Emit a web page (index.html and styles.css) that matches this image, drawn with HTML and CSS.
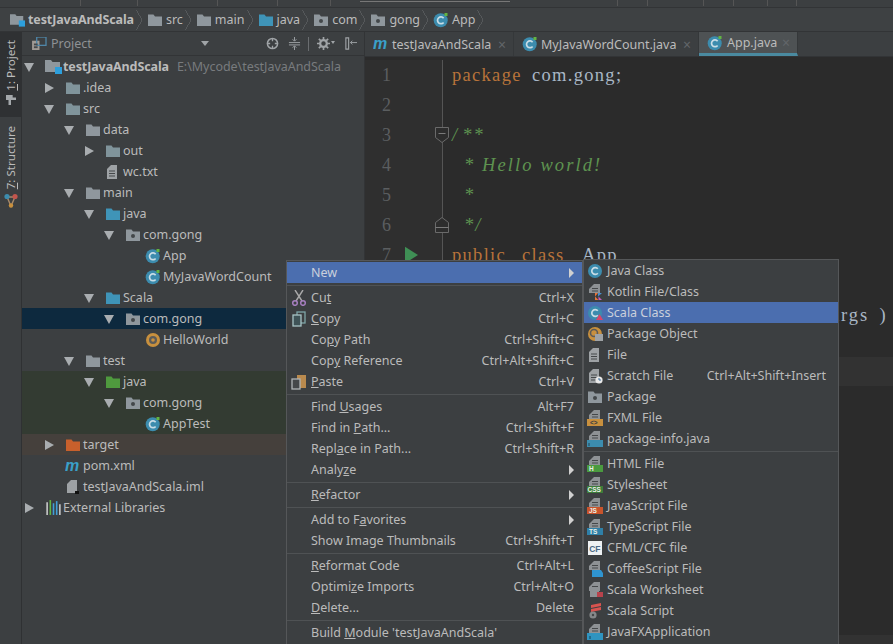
FILE: index.html
```html
<!DOCTYPE html>
<html lang="en">
<head>
<meta charset="utf-8">
<title>testJavaAndScala</title>
<link rel="stylesheet" href="styles.css">
</head>
<body>
<svg class="defs" width="0" height="0" aria-hidden="true">
  <symbol id="folder" viewBox="0 0 16 16"><path fill="currentColor" d="M1 2.5h5.5l1.5 2h7v9.5H1z"/></symbol>
  <symbol id="pkg" viewBox="0 0 16 16"><path fill="currentColor" d="M1 2.5h5.5l1.5 2h7v9.5H1z"/><circle cx="8" cy="9" r="2" fill="#43474a"/></symbol>
  <symbol id="root" viewBox="0 0 17 17"><path fill="#8f979d" d="M0 2h6l1.5 2H15v10H0z"/><rect x="10" y="9" width="7" height="7" fill="#2d9fdc"/></symbol>
  <symbol id="cls" viewBox="0 0 16 16"><circle cx="7.7" cy="8.3" r="7" fill="#3c8cae"/><path d="M10.6 6.2a3.4 3.4 0 1 0 0 4.2" fill="none" stroke="#c9dde6" stroke-width="1.7"/><path d="M11.5 1h3v3h-3z" fill="#62b543"/></symbol>
  <symbol id="obj" viewBox="0 0 16 16"><circle cx="8" cy="8" r="7" fill="#c8903e"/><circle cx="8" cy="8" r="4" fill="#5c5b58"/><circle cx="8" cy="8" r="1.8" fill="#c8903e"/></symbol>
  <symbol id="doc" viewBox="0 0 16 16"><path fill="#9ea2a5" d="M6 1h6v14H2V5z"/><path stroke="#45484a" stroke-width="1" d="M4 7h6M4 9.5h6M4 12h6"/></symbol>
  <symbol id="tpl" viewBox="0 0 16 16"><path fill="#8e9295" d="M7 0h6v9H2V5z"/><path stroke="#45484a" stroke-width="1" d="M5 4.5h6M5 7h6"/></symbol>
</svg>

<header class="topstrip"></header>

<nav class="crumbs">
  <span class="crumb c-first"><svg class="ic-root"><use href="#root"/></svg><b>testJavaAndScala</b></span><i class="chev"></i>
  <span class="crumb"><svg class="ic16 grey"><use href="#folder"/></svg>src</span><i class="chev"></i>
  <span class="crumb"><svg class="ic16 grey"><use href="#folder"/></svg>main</span><i class="chev"></i>
  <span class="crumb"><svg class="ic16 blue"><use href="#folder"/></svg>java</span><i class="chev"></i>
  <span class="crumb"><svg class="ic16 grey"><use href="#pkg"/></svg>com</span><i class="chev"></i>
  <span class="crumb"><svg class="ic16 grey"><use href="#pkg"/></svg>gong</span><i class="chev"></i>
  <span class="crumb"><svg class="ic16"><use href="#cls"/></svg>App</span><i class="chev"></i>
</nav>

<div class="workspace">
  <aside class="toolstrip">
    <div class="tool tool-on">
      <span class="tool-t"><u>1</u>: Project</span>
      <svg class="tool-ic" viewBox="0 0 12 12"><path fill="#a4a8ab" d="M0 0h8v3h4v3H6v6H3V6H0z"/></svg>
    </div>
    <div class="tool">
      <span class="tool-t"><u>7</u>: Structure</span>
      <svg class="tool-ic2" viewBox="0 0 14 15"><path d="M3 4l4 9 4-9z" fill="none" stroke="#a88a6a" stroke-width="1.4"/><circle cx="3" cy="3.5" r="2.6" fill="#3c8cae"/><circle cx="11" cy="3.5" r="2.6" fill="#c2554d"/><circle cx="7" cy="12.5" r="2.2" fill="#c8903e"/></svg>
    </div>
  </aside>

  <section class="project">
    <div class="ph">
      <svg class="ph-ic" viewBox="0 0 16 14"><rect x="0" y="4" width="8" height="10" fill="#a09a94"/><rect x="5" y="0" width="10" height="9" fill="none" stroke="#4f86a8" stroke-width="1.4"/><rect x="2" y="7" width="4" height="2" fill="#45484a"/><rect x="2" y="10" width="4" height="2" fill="#45484a"/></svg>
      <span class="ph-t">Project</span>
      <i class="ph-drop"></i>
      <svg class="ph-btn b1" viewBox="0 0 14 14"><circle cx="7" cy="7" r="5.5" fill="none" stroke="#a0a4a7" stroke-width="1.6"/><path d="M7 1v3.5M7 9.5V13M1 7h3.5M9.5 7H13" stroke="#a0a4a7" stroke-width="1.4"/></svg>
      <svg class="ph-btn b2" viewBox="0 0 14 14"><path d="M1 6h12M1 8.500h12" stroke="#a0a4a7"/><path d="M7 0v4M5 2.500l2 2 2-2M7 14v-4M5 11.500l2-2 2 2" fill="none" stroke="#a0a4a7"/></svg>
      <i class="ph-sep"></i>
      <svg class="ph-btn b3" viewBox="0 0 14 14"><circle cx="7" cy="7" r="3.600" fill="none" stroke="#a0a4a7" stroke-width="2.400"/><path d="M7 0v3M7 11v3M0 7h3M11 7h3M2 2l2 2M10 10l2 2M12 2l-2 2M4 10l-2 2" stroke="#a0a4a7" stroke-width="1.800"/></svg>
      <i class="ph-drop2"></i>
      <svg class="ph-btn b4" viewBox="0 0 14 14"><path d="M2 1h3v12H2z" fill="none" stroke="#a0a4a7" stroke-width="1.200"/><path d="M7 6h7M9 4L7 6l2 2" fill="none" stroke="#a0a4a7"/></svg>
    </div>
    <div class="tree">
      <div class="row l0"><i class="ar down"></i><svg class="ic17 mr1"><use href="#root"/></svg><b>testJavaAndScala</b><span class="path">E:\Mycode\testJavaAndScala</span></div>
      <div class="row l1"><i class="ar right"></i><svg class="ic16 excl"><use href="#folder"/></svg>.idea</div>
      <div class="row l1"><i class="ar down"></i><svg class="ic16 excl"><use href="#folder"/></svg>src</div>
      <div class="row l2"><i class="ar down"></i><svg class="ic16 grey"><use href="#folder"/></svg>data</div>
      <div class="row l3"><i class="ar right"></i><svg class="ic16 excl"><use href="#folder"/></svg>out</div>
      <div class="row l3"><i class="ar"></i><svg class="ic16"><use href="#doc"/></svg>wc.txt</div>
      <div class="row l2"><i class="ar down"></i><svg class="ic16 grey"><use href="#folder"/></svg>main</div>
      <div class="row l3"><i class="ar down"></i><svg class="ic16 blue"><use href="#folder"/></svg>java</div>
      <div class="row l4"><i class="ar down"></i><svg class="ic16 grey"><use href="#pkg"/></svg>com.gong</div>
      <div class="row l5"><i class="ar"></i><svg class="ic16"><use href="#cls"/></svg>App</div>
      <div class="row l5"><i class="ar"></i><svg class="ic16"><use href="#cls"/></svg>MyJavaWordCount</div>
      <div class="row l3"><i class="ar down"></i><svg class="ic16 blue"><use href="#folder"/></svg>Scala</div>
      <div class="row l4 sel"><i class="ar down"></i><svg class="ic16 grey"><use href="#pkg"/></svg>com.gong</div>
      <div class="row l5"><i class="ar"></i><svg class="ic16"><use href="#obj"/></svg>HelloWorld</div>
      <div class="row l2"><i class="ar down"></i><svg class="ic16 grey"><use href="#folder"/></svg>test</div>
      <div class="row l3 tst"><i class="ar down"></i><svg class="ic16 green"><use href="#folder"/></svg>java</div>
      <div class="row l4 tst"><i class="ar down"></i><svg class="ic16 grey"><use href="#pkg"/></svg>com.gong</div>
      <div class="row l5 tst"><i class="ar"></i><svg class="ic16"><use href="#cls"/></svg>AppTest</div>
      <div class="row l1 tgt"><i class="ar right"></i><svg class="ic16 orange"><use href="#folder"/></svg>target</div>
      <div class="row l1"><i class="ar"></i><svg class="ic16" viewBox="0 0 16 16"><text x="0" y="13" class="mvn">m</text></svg>pom.xml</div>
      <div class="row l1"><i class="ar"></i><svg class="ic16" viewBox="0 0 16 16"><path fill="#9ea2a5" d="M6 1h6v13H2V5z"/><rect x="10" y="12" width="4" height="3" fill="#111"/></svg>testJavaAndScala.iml</div>
      <div class="row l0"><i class="ar right"></i><svg class="ic17 mr1" viewBox="0 0 16 16"><path d="M2 3v12" stroke="#c9c9c9" stroke-width="1.500"/><path d="M5 1v14" stroke="#62b543" stroke-width="1.500"/><path d="M8 4v11" stroke="#40a0d8" stroke-width="1.500"/><path d="M11 2v13" stroke="#40a0d8" stroke-width="1.500"/><path d="M14 5v10" stroke="#c9c9c9" stroke-width="1.500"/></svg>External Libraries</div>
    </div>
  </section>

  <main class="editor">
    <div class="tabs">
      <div class="tab t1"><svg class="ic16" viewBox="0 0 16 16"><text x="0" y="13" class="mvn">m</text></svg>testJavaAndScala<i class="x">×</i></div>
      <div class="tab t2"><svg class="ic16"><use href="#cls"/></svg>MyJavaWordCount.java<i class="x">×</i></div>
      <div class="tab t3"><svg class="ic16"><use href="#cls"/></svg>App.java<i class="x">×</i></div>
    </div>
    <div class="code">
      <div class="line"><div class="gut"><span class="ln">1</span></div><pre><span class="kw w8">package</span><span class="pk">com.gong;</span></pre></div>
      <div class="line"><div class="gut"><span class="ln">2</span></div><pre></pre></div>
      <div class="line"><div class="gut"><span class="ln">3</span><svg class="fold" viewBox="0 0 16 18"><path d="M1.500 1.500h13v10L8 16.500 1.500 11.500z" fill="#2d2d2d" stroke="#6a6a6a"/><path d="M4.500 7.500h7" stroke="#7a7a7a"/></svg></div><pre class="cm"><span class="sl">/</span>**</pre></div>
      <div class="line"><div class="gut"><span class="ln">4</span></div><pre class="cm cmi">* Hello world!</pre></div>
      <div class="line"><div class="gut"><span class="ln">5</span></div><pre class="cm cmi">*</pre></div>
      <div class="line"><div class="gut"><span class="ln">6</span><svg class="fold" viewBox="0 0 16 18"><path d="M1.500 16.500h13v-10L8 1.500 1.500 6.500z" fill="#2d2d2d" stroke="#6a6a6a"/><path d="M1.500 11.500h13" stroke="#7a7a7a"/></svg></div><pre class="cm cmi">*/</pre></div>
      <div class="line"><div class="gut"><span class="ln">7</span><svg class="run" viewBox="0 0 14 18"><path d="M0 0l14 9-14 9z" fill="#3f8f55"/></svg></div><pre><span class="kw w7">public</span><span class="kw w6">class</span><span class="pk">App</span></pre></div>
      <div class="line"><div class="gut"><span class="ln">8</span></div><pre class="pk">{</pre></div>
      <div class="line"><div class="gut"><span class="ln">9</span></div><pre class="pk"><span class="lead">public static void main( String[] </span><span class="args">args )</span></pre></div>
      <div class="line"><div class="gut"><span class="ln">10</span></div><pre class="pk">{</pre></div>
      <div class="line current"><div class="gut"><span class="ln">11</span></div><pre></pre></div>
    </div>
    <div class="edbottom"></div>
  </main>
</div>

<div class="menu">
  <div class="mi hi"><span class="mi-ic"></span><span>New</span><i class="sub-ar"></i></div>
  <hr>
  <div class="mi"><span class="mi-ic"><svg class="ic16" viewBox="0 0 16 16"><path d="M4 0l7 11M12 0L5 11" stroke="#a9a9a9" stroke-width="1.400"/><circle cx="4" cy="13" r="2.300" fill="none" stroke="#a77fc0" stroke-width="1.500"/><circle cx="12" cy="13" r="2.300" fill="none" stroke="#a77fc0" stroke-width="1.500"/></svg></span><span>Cu<u>t</u></span><span class="k">Ctrl+X</span></div>
  <div class="mi"><span class="mi-ic"><svg class="ic16" viewBox="0 0 16 16"><rect x="6" y="1" width="8" height="11" fill="none" stroke="#7ea6a8" stroke-width="1.300"/><rect x="2" y="4" width="8" height="11" fill="#3f5357" stroke="#a8c4c6" stroke-width="1.300"/></svg></span><span><u>C</u>opy</span><span class="k">Ctrl+C</span></div>
  <div class="mi"><span class="mi-ic"></span><span>Co<u>p</u>y Path</span><span class="k">Ctrl+Shift+C</span></div>
  <div class="mi"><span class="mi-ic"></span><span>Cop<u>y</u> Reference</span><span class="k">Ctrl+Alt+Shift+C</span></div>
  <div class="mi"><span class="mi-ic"><svg class="ic16" viewBox="0 0 16 16"><rect x="6" y="1" width="9" height="13" fill="#b98a4e"/><rect x="1" y="5" width="8" height="10" fill="#45484a" stroke="#b0b4b6" stroke-width="1.300"/></svg></span><span><u>P</u>aste</span><span class="k">Ctrl+V</span></div>
  <hr>
  <div class="mi"><span class="mi-ic"></span><span>Find <u>U</u>sages</span><span class="k">Alt+F7</span></div>
  <div class="mi"><span class="mi-ic"></span><span>Find in <u>P</u>ath...</span><span class="k">Ctrl+Shift+F</span></div>
  <div class="mi"><span class="mi-ic"></span><span>Repl<u>a</u>ce in Path...</span><span class="k">Ctrl+Shift+R</span></div>
  <div class="mi"><span class="mi-ic"></span><span>Analy<u>z</u>e</span><i class="sub-ar"></i></div>
  <hr>
  <div class="mi"><span class="mi-ic"></span><span><u>R</u>efactor</span><i class="sub-ar"></i></div>
  <hr>
  <div class="mi"><span class="mi-ic"></span><span>Add to F<u>a</u>vorites</span><i class="sub-ar"></i></div>
  <div class="mi"><span class="mi-ic"></span><span>Show Image Thumbnails</span><span class="k">Ctrl+Shift+T</span></div>
  <hr>
  <div class="mi"><span class="mi-ic"></span><span><u>R</u>eformat Code</span><span class="k">Ctrl+Alt+L</span></div>
  <div class="mi"><span class="mi-ic"></span><span>Optimi<u>z</u>e Imports</span><span class="k">Ctrl+Alt+O</span></div>
  <div class="mi"><span class="mi-ic"></span><span><u>D</u>elete...</span><span class="k">Delete</span></div>
  <hr>
  <div class="mi"><span class="mi-ic"></span><span>Build <u>M</u>odule 'testJavaAndScala'</span></div>
</div>

<div class="menu submenu">
  <div class="mi"><span class="mi-ic"><svg class="ic16" viewBox="0 0 16 16"><circle cx="8" cy="8" r="7" fill="#3c8cae"/><path d="M10.800 5.800a3.400 3.400 0 1 0 0 4.400" fill="none" stroke="#c9dde6" stroke-width="1.700"/></svg></span><span>Java Class</span></div>
  <div class="mi"><span class="mi-ic"><svg class="ic16" viewBox="0 0 16 16"><use href="#tpl"/><path d="M8 16V9h3l-3 3.500L11.500 16z" fill="#e8743b"/><path d="M11 9h4l-4 3.500z" fill="#4a8fd0"/><path d="M11.500 16l3.500 0-3.500-3.500z" fill="#c25dbb"/></svg></span><span>Kotlin File/Class</span></div>
  <div class="mi hi"><span class="mi-ic"><svg class="ic16" viewBox="0 0 16 16"><circle cx="8" cy="8" r="7" fill="#3c8cae"/><path d="M10.800 5.800a3.400 3.400 0 1 0 0 4.400" fill="none" stroke="#c9dde6" stroke-width="1.700"/><path d="M9 15l3.500-6 3.500 6z" fill="#d8456a"/></svg></span><span>Scala Class</span></div>
  <div class="mi"><span class="mi-ic"><svg class="ic16" viewBox="0 0 16 16"><circle cx="8" cy="8" r="7" fill="#c8903e"/><circle cx="7" cy="7" r="3.500" fill="none" stroke="#5c5b58" stroke-width="1.600"/><rect x="8" y="8" width="8" height="7" fill="#9ea2a5"/></svg></span><span>Package Object</span></div>
  <div class="mi"><span class="mi-ic"><svg class="ic16"><use href="#doc"/></svg></span><span>File</span></div>
  <div class="mi"><span class="mi-ic"><svg class="ic16" viewBox="0 0 16 16"><use href="#doc"/><circle cx="12" cy="12" r="3.600" fill="#e8e8e8"/><path d="M12 10v2h2" fill="none" stroke="#3c6e9c"/></svg></span><span>Scratch File</span><span class="k">Ctrl+Alt+Shift+Insert</span></div>
  <div class="mi"><span class="mi-ic"><svg class="ic16 grey"><use href="#pkg"/></svg></span><span>Package</span></div>
  <div class="mi"><span class="mi-ic"><svg class="ic16" viewBox="0 0 16 16"><use href="#tpl"/><rect y="9" width="16" height="7" fill="#c8903e"/><text x="3" y="15" class="badge dark">&lt;&gt;</text></svg></span><span>FXML File</span></div>
  <div class="mi"><span class="mi-ic"><svg class="ic16" viewBox="0 0 16 16"><use href="#tpl"/><rect y="9" width="16" height="7" fill="#3c8cae"/><path d="M2 12v3" stroke="#2b5c72" stroke-width="1.500"/></svg></span><span>package-info.java</span></div>
  <hr>
  <div class="mi"><span class="mi-ic"><svg class="ic16" viewBox="0 0 16 16"><use href="#tpl"/><rect y="9" width="16" height="7" fill="#4a9a3f"/><text x="2" y="15.200" class="badge">H</text></svg></span><span>HTML File</span></div>
  <div class="mi"><span class="mi-ic"><svg class="ic16" viewBox="0 0 16 16"><use href="#tpl"/><rect y="9" width="16" height="7" fill="#3d7d3a"/><text x="0.500" y="15.200" class="badge">CSS</text></svg></span><span>Stylesheet</span></div>
  <div class="mi"><span class="mi-ic"><svg class="ic16" viewBox="0 0 16 16"><use href="#tpl"/><rect y="9" width="16" height="7" fill="#c9542c"/><text x="2" y="15.200" class="badge">JS</text></svg></span><span>JavaScript File</span></div>
  <div class="mi"><span class="mi-ic"><svg class="ic16" viewBox="0 0 16 16"><use href="#tpl"/><rect y="9" width="16" height="7" fill="#2f80a8"/><text x="2" y="15.200" class="badge">TS</text></svg></span><span>TypeScript File</span></div>
  <div class="mi"><span class="mi-ic"><svg class="ic16" viewBox="0 0 16 16"><rect x="1" y="1" width="14" height="14" fill="#eef1f3"/><text x="2.200" y="11.500" class="cf">CF</text></svg></span><span>CFML/CFC file</span></div>
  <div class="mi"><span class="mi-ic"><svg class="ic16" viewBox="0 0 16 16"><use href="#tpl"/><path d="M5 9h9l2 3v4H5z" fill="#2f94d0"/></svg></span><span>CoffeeScript File</span></div>
  <div class="mi"><span class="mi-ic"><svg class="ic16" viewBox="0 0 16 16"><use href="#tpl"/><rect x="3" y="6" width="9" height="9" fill="#8e9295"/><rect x="10" y="10" width="6" height="5" fill="#b8434c"/></svg></span><span>Scala Worksheet</span></div>
  <div class="mi"><span class="mi-ic"><svg class="ic16" viewBox="0 0 16 16"><path d="M4 2l10-2v3L4 5zM4 6l10-2v3L4 9z" fill="#d9534f"/><circle cx="6" cy="12" r="3.600" fill="#85888a"/><circle cx="6" cy="12" r="1.200" fill="#45484a"/></svg></span><span>Scala Script</span></div>
  <div class="mi"><span class="mi-ic"><svg class="ic16" viewBox="0 0 16 16"><use href="#tpl"/><rect y="9" width="16" height="7" fill="#2f94c0"/><path d="M3 12v3" stroke="#1e5d7a" stroke-width="1.500"/></svg></span><span>JavaFXApplication</span></div>
</div>
</body>
</html>
```
FILE: styles.css
```css
* { box-sizing: border-box; }
html, body { margin: 0; height: 644px; overflow: hidden; }
body {
  position: relative;
  width: 893px;
  background: #3c3f41;
  color: #bbbbbb;
  font: 12.5px/21px "Noto Sans", "Open Sans", sans-serif;
  display: flex;
  flex-direction: column;
}
.defs { position: absolute; }
i { font-style: normal; }
svg { display: block; flex: none; }
.ic16 { width: 16px; height: 16px; }
.ic17 { width: 17px; height: 17px; }
.ic-root { width: 15px; height: 16px; overflow: visible; }
.mr1 { margin-right: 1px; }
.grey { color: #8f979d; }
.blue { color: #3f94b8; }
.green { color: #4f9a3e; }
.orange { color: #c8602c; }
.excl { color: #80949b; }
.mvn { font: italic bold 16px "Liberation Sans", sans-serif; fill: #3aa0c9; }
.badge { font: bold 6.500px "Liberation Sans", sans-serif; fill: #e8f0e8; }
.badge.dark { fill: #3c3f41; }
.cf { font: bold 8.500px "Liberation Sans", sans-serif; fill: #4a6a86; }

.topstrip {
  height: 8px;
  flex: none;
  border-bottom: 1px solid #323436;
  background:
    linear-gradient(#777, #777) 360px 1px / 150px 1px no-repeat,
    linear-gradient(#555, #555) 80px 0 / 1px 6px no-repeat,
    linear-gradient(#555, #555) 137px 0 / 1px 6px no-repeat,
    linear-gradient(#555, #555) 217px 0 / 1px 6px no-repeat,
    linear-gradient(#555, #555) 277px 0 / 1px 6px no-repeat,
    linear-gradient(#555, #555) 330px 0 / 1px 6px no-repeat,
    linear-gradient(#555, #555) 617px 0 / 1px 6px no-repeat,
    linear-gradient(#555, #555) 647px 0 / 1px 6px no-repeat,
    linear-gradient(#555, #555) 703px 0 / 1px 6px no-repeat,
    linear-gradient(#555, #555) 733px 0 / 1px 6px no-repeat,
    linear-gradient(#555, #555) 767px 0 / 1px 6px no-repeat,
    linear-gradient(#555, #555) 796px 0 / 1px 6px no-repeat,
    #3c3f41;
}

.crumbs {
  height: 24px;
  flex: none;
  display: flex;
  align-items: center;
  padding-left: 10px;
  border-bottom: 1px solid #323436;
  background: #3e4143;
}
.crumb { display: flex; align-items: center; gap: 3px; }
.crumb b { font-weight: 700; letter-spacing: -0.1px; }
.chev {
  width: 6px;
  height: 20px;
  margin: 0 5px 0 2px;
  background: linear-gradient(to top right, transparent 48%, #55585a 48%, #55585a 56%, transparent 56%) 0 0 / 100% 50% no-repeat,
              linear-gradient(to bottom right, transparent 48%, #55585a 48%, #55585a 56%, transparent 56%) 0 100% / 100% 50% no-repeat;
}

.workspace { flex: 1; display: flex; min-height: 0; }

.toolstrip { width: 22px; flex: none; border-right: 1px solid #2f3133; background: #3c3f41; }
.tool { display: flex; flex-direction: column; align-items: center; padding: 8px 0 6px 1px; }
.tool-on { background: #2f3133; height: 85px; }
.tool + .tool { padding-top: 9px; }
.tool-t { writing-mode: vertical-rl; transform: rotate(180deg); font-size: 11.600px; line-height: 20px; white-space: nowrap; }
.tool-ic { width: 12px; height: 10px; margin-top: 4px; }
.tool-ic2 { width: 14px; height: 15px; margin-top: 4px; }

.project { width: 343px; flex: none; border-right: 1px solid #323436; display: flex; flex-direction: column; }
.ph { height: 24px; flex: none; display: flex; align-items: center; padding-left: 10px; border-bottom: 1px solid #323436; }
.ph-ic { width: 15px; height: 13px; }
.ph-t { margin-left: 4px; color: #8f9295; width: 150px; }
.ph-drop { width: 0; height: 0; border: 4px solid transparent; border-top: 5px solid #a0a4a7; border-bottom: 0; }
.ph-btn { width: 13px; height: 13px; }
.b1 { margin-left: 57px; }
.b2 { margin-left: 9px; }
.ph-sep { width: 1px; height: 14px; background: #6a6d70; margin-left: 7px; }
.b3 { margin-left: 8px; }
.ph-drop2 { width: 0; height: 0; border: 2px solid transparent; border-top: 3px solid #a0a4a7; margin-left: 1px; }
.b4 { margin-left: 9px; }

.tree { flex: 1; }
.row { height: 21px; display: flex; align-items: center; white-space: nowrap; }
.row .ic16 { margin-right: 2px; }
.row .ic17 { margin-right: 1px; }
.row b { font-weight: 700; letter-spacing: -0.1px; }
.path { margin-left: 8px; color: #787b7e; letter-spacing: -0.04px; }
.ar { width: 14px; height: 10px; margin-right: 9px; flex: none; position: relative; }
.ar.down::before, .ar.right::before { content: ""; position: absolute; width: 0; height: 0; border: 0 solid transparent; }
.ar.down::before { left: 2px; top: 1px; border-width: 9px 5px 0; border-top-color: #a9adb0; }
.ar.right::before { left: 3px; top: 0; border-width: 5px 0 5px 9px; border-left-color: #a9adb0; }
.l0 { padding-left: 0; }
.l1 { padding-left: 20px; }
.l2 { padding-left: 40px; }
.l3 { padding-left: 60px; }
.l4 { padding-left: 80px; }
.l5 { padding-left: 100px; }
.sel { background: #0d293e; }
.tst { background: #333b32; }
.tgt { background: #45403c; }

.editor { flex: 1; min-width: 0; background: #2b2b2b; display: flex; flex-direction: column; position: relative; }
.tabs { height: 25px; flex: none; display: flex; background: #3c3f41; border-bottom: 1px solid #323436; }
.tab { display: flex; align-items: center; position: relative; white-space: nowrap; border-right: 1px solid #35383a; }
.tab .ic16 { margin-right: 3px; }
.t1 { width: 149px; padding-left: 8px; }
.t2 { width: 185px; padding-left: 8px; }
.t3 { width: 99px; padding-left: 8px; background: #4e5254; border-bottom: 3px solid #4a8aa0; }
.t3 .ic16 { margin-right: 4px; }
.x { position: absolute; right: 7px; color: #62666a; font-size: 14px; }

.code { flex: 1; padding-top: 3px; font: 18.500px/30px "Liberation Serif", serif; color: #a9b7c6; }
.line { height: 30px; display: flex; }
.line pre { margin: 0; font: inherit; white-space: pre; padding-left: 9px; letter-spacing: 1.300px; }
.line pre.cm { color: #5e9350; font-style: italic; letter-spacing: 2.100px; }
.line pre.cmi { padding-left: 21px; }
.sl { letter-spacing: 5px; }
.w8, .w7, .w6 { display: inline-block; }
.w8 { width: 80px; }
.w7 { width: 70px; }
.w6 { width: 60px; }
.lead { display: inline-block; width: 379px; padding-left: 40px; white-space: nowrap; overflow: hidden; vertical-align: top; }
.args { letter-spacing: 1.900px; word-spacing: 4px; }
.gut { width: 78px; flex: none; height: 30px; border-right: 1px solid #555; background: #2f2f2f; position: relative; }
.ln { display: block; width: 26px; text-align: right; color: #5b5e60; font-size: 18px; letter-spacing: 0; }
.fold { position: absolute; right: -8px; top: 6px; width: 16px; height: 18px; }
.run { position: absolute; left: 40px; top: 6px; width: 13px; height: 18px; }
.kw { color: #b8733a; }
.pk { color: #a9b7c6; }
.current { margin-top: -3px; height: 29px; background: #323232; }
.edbottom { height: 9px; flex: none; background: #323232; }

.menu {
  position: absolute;
  left: 286px;
  top: 260px;
  width: 297px;
  height: 400px;
  background: #3c3f41;
  border: 1px solid #555759;
  padding-top: 1px;
}
.submenu { left: 583px; top: 259px; width: 256px; padding-top: 0; }
.mi { height: 21px; display: flex; align-items: center; padding: 0 8px 0 4px; white-space: nowrap; position: relative; }
.submenu .mi { padding: 0 12px 0 3px; }
.mi-ic { width: 16px; height: 16px; margin-right: 4px; flex: none; }
.k { margin-left: auto; }
.hi { background: #4b6eaf; color: #c9d0dc; }
.sub-ar { margin-left: auto; width: 0; height: 0; border: 5px solid transparent; border-left: 5px solid #d0d0d0; border-right: 0; }
.menu hr { height: 1px; border: 0; margin: 2px 0 1px; background: #4f5254; }
```
